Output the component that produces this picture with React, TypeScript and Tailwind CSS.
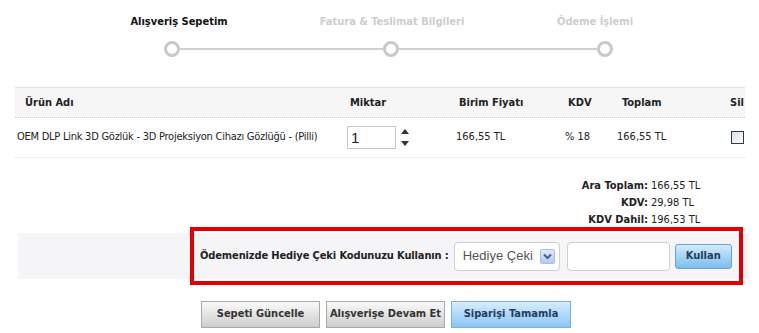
import React from 'react'

const steps = [
  { label: 'Alışveriş Sepetim', active: true },
  { label: 'Fatura & Teslimat Bilgileri', active: false },
  { label: 'Ödeme İşlemi', active: false },
]

function StepDot() {
  return <div className="w-[16px] h-[16px] rounded-full border-[3px] border-[#c9c9c9] bg-white flex-shrink-0" />
}

export default function App() {
  return (
    <div className="w-[759px] h-[333px] overflow-hidden bg-white text-[#222] text-[11px] font-['DejaVu_Sans_Condensed','DejaVu_Sans',sans-serif]">
      {/* STEPPER */}
      <div className="grid grid-cols-[222px_204px_202px] ml-[68px] pt-[15px] h-[30px]">
        {steps.map(s => (
          <div
            key={s.label}
            className={`text-center font-bold leading-[14px] whitespace-nowrap ${s.active ? 'text-[#111]' : 'text-[#cdcdcd]'}`}
          >
            {s.label}
          </div>
        ))}
      </div>
      <div className="flex items-center ml-[164px] mt-[11px] h-[16px]">
        <StepDot />
        <div className="w-[203px] h-[2px] bg-[#cfcfcf]" />
        <StepDot />
        <div className="w-[198px] h-[2px] bg-[#cfcfcf]" />
        <StepDot />
      </div>

      {/* TABLE */}
      <div className="ml-[15px] w-[730px] mt-[30px] border-t border-[#e4e4e4]">
        <div className="grid grid-cols-[325px_100px_115px_50px_95px_45px] h-[30px] items-center bg-[#f6f6f6] border-b border-dotted border-[#cfcfcf] font-bold text-[#222] pt-[1px]">
          <div className="pl-[10px]">Ürün Adı</div>
          <div className="pl-[10px]">Miktar</div>
          <div className="pl-[19px]">Birim Fiyatı</div>
          <div className="pl-[13px]">KDV</div>
          <div className="pl-[17px]">Toplam</div>
          <div className="text-right pr-[1px]">Sil</div>
        </div>
        <div className="grid grid-cols-[325px_100px_115px_50px_95px_45px] h-[40px] items-center border-b border-dotted border-[#e0e0e0]">
          <div className="pl-[2px] whitespace-nowrap tracking-[-0.25px]">OEM DLP Link 3D Gözlük - 3D Projeksiyon Cihazı Gözlüğü - (Pilli)</div>
          <div className="pl-[7px] flex items-center gap-[4px]">
            <input
              defaultValue="1"
              className="w-[49px] h-[23px] border border-[#c8c8c8] px-[3px] text-[15px] text-[#222] font-['Liberation_Sans',sans-serif] outline-none"
            />
            <div className="flex flex-col gap-[7px] pl-[1px]">
              <svg width="8" height="5" viewBox="0 0 8 5"><path d="M4 0L8 5H0Z" fill="#333" /></svg>
              <svg width="8" height="5" viewBox="0 0 8 5"><path d="M0 0H8L4 5Z" fill="#333" /></svg>
            </div>
          </div>
          <div className="pl-[16px]">166,55 TL</div>
          <div className="pl-[10px]">% 18</div>
          <div className="pl-[12px]">166,55 TL</div>
          <div className="flex justify-end pr-[1px]">
            <div className="w-[13px] h-[13px] border border-[#2a3b4c] bg-gradient-to-br from-[#dcdcdc] to-white" />
          </div>
        </div>
      </div>

      {/* TOTALS */}
      <div className="grid grid-cols-[134px_auto] gap-x-[3px] ml-[514px] mt-[19px] leading-[17px]">
        <div className="text-right font-bold">Ara Toplam:</div>
        <div>166,55 TL</div>
        <div className="text-right font-bold">KDV:</div>
        <div>29,98 TL</div>
        <div className="text-right font-bold">KDV Dahil:</div>
        <div>196,53 TL</div>
      </div>

      {/* GIFT CODE */}
      <div className="ml-[18px] w-[730px] h-[46px] mt-[5px] bg-[#f5f4f6] flex justify-end items-center">
        <div className="-my-[6px] mr-[5px] h-[58px] w-[553px] border-[4px] border-[#e10000] flex items-center pl-[6px]">
          <span className="font-bold whitespace-nowrap tracking-[-0.12px]">Ödemenizde Hediye Çeki Kodunuzu Kullanın :</span>
          <div className="ml-[5px] w-[106px] h-[29px] bg-white border border-[#d0d0d0] rounded-[4px] flex items-center pl-[8px] pr-[4px]">
            <span className="flex-1 whitespace-nowrap text-[13px] text-[#555] font-['Liberation_Sans',sans-serif]">Hediye Çeki</span>
            <div className="w-[15px] h-[15px] rounded-[2px] border border-[#a8c0e4] bg-gradient-to-b from-[#dfe9fb] to-[#b5cbf2] flex items-center justify-center">
              <svg width="9" height="7" viewBox="0 0 9 7">
                <path d="M1 1.5L4.5 5L8 1.5" stroke="#4d6185" strokeWidth="2" fill="none" />
              </svg>
            </div>
          </div>
          <div className="ml-[7px] w-[103px] h-[29px] bg-white border border-[#d0d0d0] rounded-[4px]" />
          <button className="ml-[5px] w-[57px] h-[25px] rounded-[3px] border border-[#6aa3d2] bg-gradient-to-b from-[#d3ebfc] to-[#7cbcee] font-bold text-[#1f3d5c]">
            Kullan
          </button>
        </div>
      </div>

      {/* ACTIONS */}
      <div className="flex gap-[6px] ml-[201px] mt-[22px]">
        <button className="w-[119px] h-[27px] border border-[#a9a9a9] bg-gradient-to-b from-[#fafafa] to-[#cdcdcd] font-bold text-[#333]">
          Sepeti Güncelle
        </button>
        <button className="w-[119px] h-[27px] border border-[#a9a9a9] bg-gradient-to-b from-[#fafafa] to-[#cdcdcd] font-bold text-[#333]">
          Alışverişe Devam Et
        </button>
        <button className="w-[120px] h-[27px] border border-[#7fb0d9] bg-gradient-to-b from-[#d6edfd] to-[#8ac6f3] font-bold text-[#1f3d5c]">
          Siparişi Tamamla
        </button>
      </div>
    </div>
  )
}
